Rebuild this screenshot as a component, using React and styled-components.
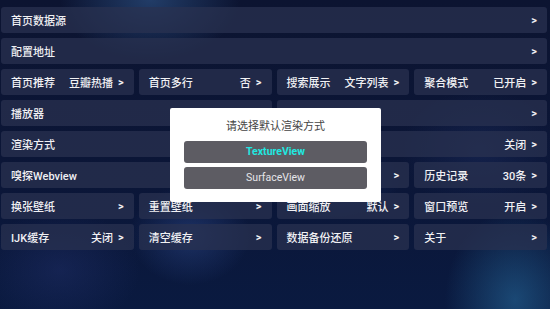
import React from "react";
import styled, { createGlobalStyle } from "styled-components";

const Global = createGlobalStyle`
  html, body {
    margin: 0;
    padding: 0;
    width: 100%;
    height: 100%;
    overflow: hidden;
  }
  body {
    font-family: Roboto, "Noto Sans CJK SC", "Noto Sans", sans-serif;
    background-color: #0a1230;
    background-image:
      radial-gradient(ellipse 90px 60px at 150px 0px, rgba(60, 110, 170, 0.45), transparent),
      radial-gradient(ellipse 70px 90px at 515px 300px, rgba(40, 110, 160, 0.55), transparent),
      radial-gradient(ellipse 60px 50px at 190px 235px, rgba(50, 80, 150, 0.45), transparent),
      radial-gradient(ellipse 80px 60px at 60px 270px, rgba(40, 55, 120, 0.35), transparent),
      radial-gradient(ellipse 70px 40px at 330px 180px, rgba(40, 80, 150, 0.35), transparent),
      radial-gradient(ellipse 80px 60px at 480px 150px, rgba(40, 60, 120, 0.3), transparent),
      linear-gradient(180deg, #0c1431 0%, #0b1638 60%, #0a1a40 100%);
  }
  #root { height: 100%; }
`;

const Page = styled.div`
  height: 100%;
  box-sizing: border-box;
  padding: 7px 3px 0 1px;
`;

const Grid = styled.div`
  display: grid;
  grid-template-columns: repeat(4, 1fr);
  grid-auto-rows: 26px;
  gap: 5px;
`;

const Cell = styled.div`
  grid-column: span ${(p) => p.$span || 1};
  display: flex;
  align-items: center;
  justify-content: space-between;
  padding: 0 10px;
  border-radius: 3px;
  background: rgba(42, 50, 80, 0.72);
  color: #f1f1f4;
  font-size: 11px;
  font-weight: 500;
  white-space: nowrap;
`;

const Label = styled.span``;

const Value = styled.span`
  display: flex;
  align-items: center;
  gap: 5px;
`;

const Arrow = styled.span`
  font-weight: 700;
  font-size: 11px;
`;

const Overlay = styled.div`
  position: fixed;
  inset: 0;
  display: flex;
  align-items: center;
  justify-content: center;
  padding-left: 1px;
`;

const Dialog = styled.div`
  width: 211px;
  box-sizing: border-box;
  background: #ffffff;
  border-radius: 2px;
  padding: 9px 14px 13px;
  display: flex;
  flex-direction: column;
  gap: 4px;
`;

const Title = styled.div`
  text-align: center;
  color: #454545;
  font-size: 11px;
  line-height: 16px;
  margin-bottom: 4px;
  font-family: "Noto Sans CJK SC", Roboto, sans-serif;
`;

const Option = styled.div`
  height: 22px;
  border-radius: 3px;
  background: #5d5c63;
  display: flex;
  align-items: center;
  justify-content: center;
  font-size: 10.5px;
  font-weight: ${(p) => (p.$active ? 700 : 400)};
  color: ${(p) => (p.$active ? "#1fe8e0" : "#e6e6ea")};
`;

const rows = [
  { label: "首页数据源", span: 4 },
  { label: "配置地址", span: 4 },
  { label: "首页推荐", value: "豆瓣热播" },
  { label: "首页多行", value: "否" },
  { label: "搜索展示", value: "文字列表" },
  { label: "聚合模式", value: "已开启" },
  { label: "播放器", span: 2 },
  { label: "", span: 2 },
  { label: "渲染方式", value: "关闭", span: 4 },
  { label: "嗅探Webview", span: 3 },
  { label: "历史记录", value: "30条" },
  { label: "换张壁纸" },
  { label: "重置壁纸" },
  { label: "画面缩放", value: "默认" },
  { label: "窗口预览", value: "开启" },
  { label: "IJK缓存", value: "关闭" },
  { label: "清空缓存" },
  { label: "数据备份还原" },
  { label: "关于" },
];

export default function App() {
  return (
    <>
      <Global />
      <Page>
        <Grid>
          {rows.map((r, i) => (
            <Cell key={i} $span={r.span}>
              <Label>{r.label}</Label>
              <Value>
                {r.value && <span>{r.value}</span>}
                <Arrow>&gt;</Arrow>
              </Value>
            </Cell>
          ))}
        </Grid>
      </Page>
      <Overlay>
        <Dialog>
          <Title>请选择默认渲染方式</Title>
          <Option $active>TextureView</Option>
          <Option>SurfaceView</Option>
        </Dialog>
      </Overlay>
    </>
  );
}
